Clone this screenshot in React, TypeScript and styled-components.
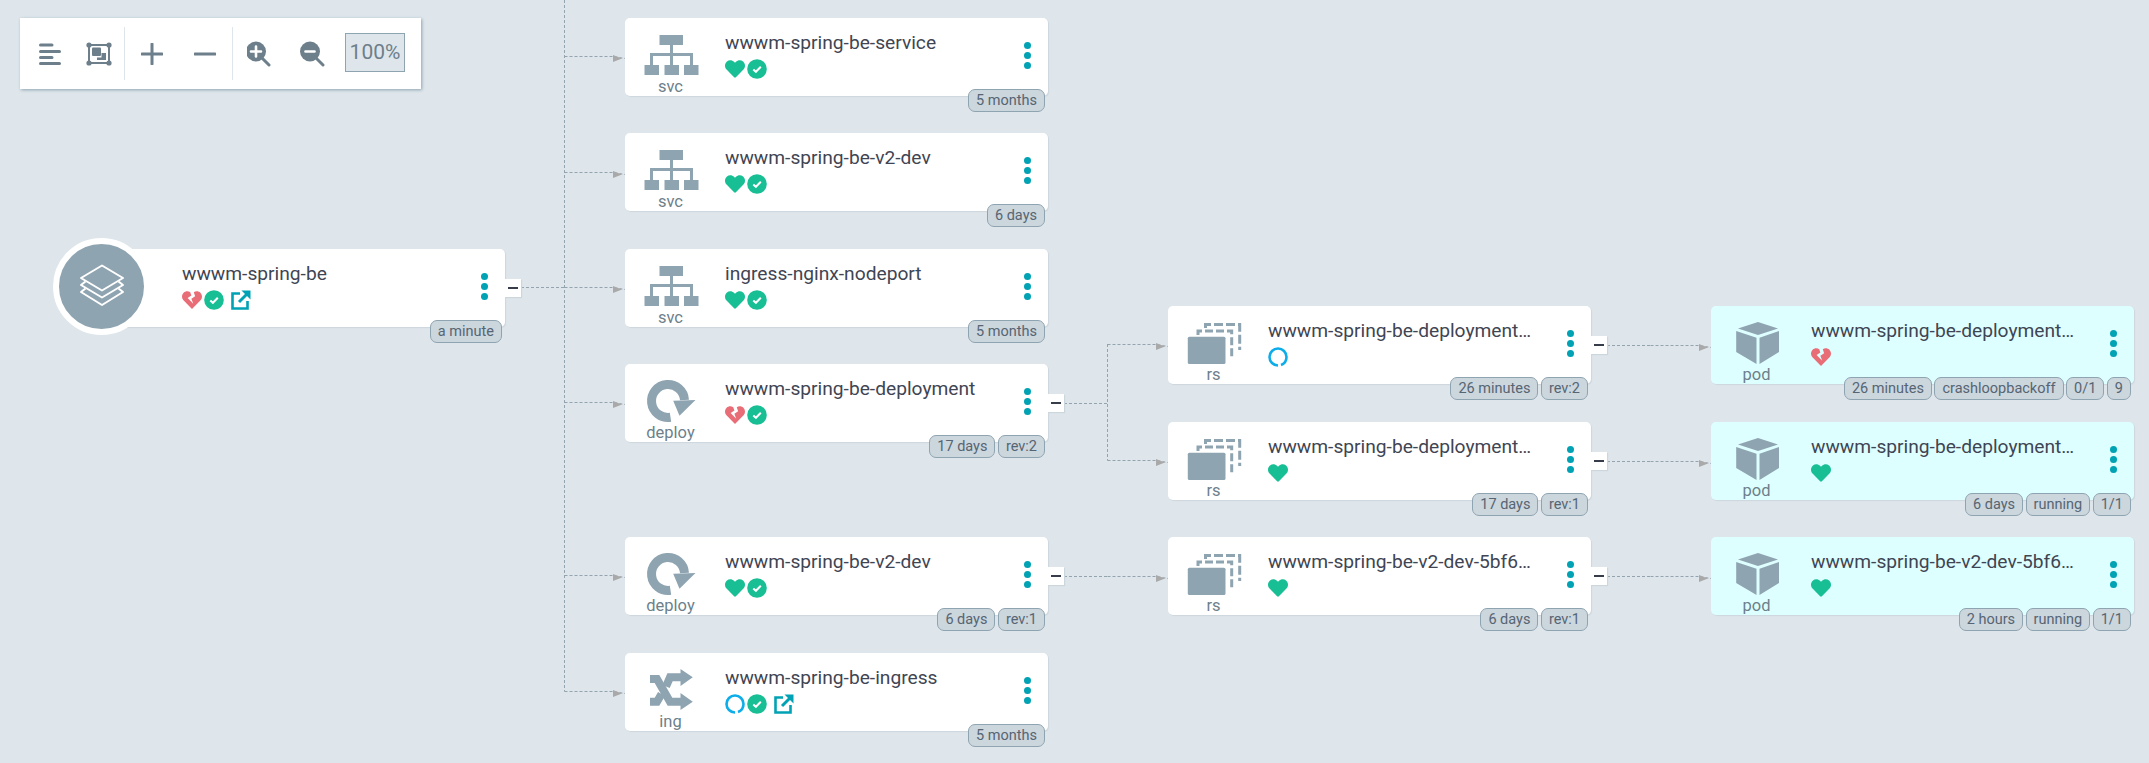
import React from 'react';
import styled, { createGlobalStyle } from 'styled-components';
import { FaHeart, FaHeartBroken } from 'react-icons/fa';

const Global = createGlobalStyle`
  html, body { margin: 0; padding: 0; background: #dee6eb; }
  body { font-family: Roboto, "Liberation Sans", sans-serif; }
`;

const Canvas = styled.div`
  position: relative;
  width: 2149px;
  height: 763px;
  overflow: hidden;
  background: #dee6eb;
`;

const EdgeLayer = styled.svg`
  position: absolute;
  left: 0;
  top: 0;
  width: 2149px;
  height: 763px;
`;

const Toolbar = styled.div`
  position: absolute;
  left: 20px;
  top: 18px;
  width: 401px;
  height: 71px;
  box-sizing: border-box;
  display: flex;
  align-items: center;
  padding: 8px 0 8px 5px;
  background: #fff;
  box-shadow: 1px 1px 3px #8fa4b1;
  z-index: 5;
`;

const ToolGroup = styled.div<{ $divided?: boolean; $w: number }>`
  display: flex;
  align-items: center;
  height: 53px;
  width: ${p => p.$w}px;
  box-sizing: border-box;
  border-right: ${p => (p.$divided ? '1px solid #dee6eb' : 'none')};
`;

const ToolButton = styled.div<{ $w: number }>`
  display: flex;
  align-items: center;
  justify-content: center;
  width: ${p => p.$w}px;
  height: 53px;
  color: #6d7f8b;
`;

const ZoomBox = styled.div`
  width: 60px;
  height: 39px;
  margin-left: 6px;
  margin-top: -3px;
  box-sizing: border-box;
  display: flex;
  align-items: center;
  justify-content: center;
  background: #dee6eb;
  border: 1px solid #8fa4b1;
  color: #6d7f8b;
  font-size: 21px;
`;

const Card = styled.div<{ $x: number; $y: number; $pod?: boolean }>`
  position: absolute;
  left: ${p => p.$x}px;
  top: ${p => p.$y}px;
  width: 423px;
  height: 78px;
  display: flex;
  background: ${p => (p.$pod ? '#deffff' : '#fff')};
  border-radius: 5px;
  box-shadow: 1px 1px 1px #ccd6dd;
`;

const IconCol = styled.div`
  width: 91px;
  flex: none;
  padding-top: 14px;
  display: flex;
  flex-direction: column;
  align-items: center;
`;

const KindLabel = styled.div`
  font-size: 16.5px;
  line-height: 16px;
  margin-top: 1px;
  color: #6d7f8b;
`;

const AppBadge = styled.div`
  position: absolute;
  left: -29px;
  top: -11px;
  width: 97px;
  height: 97px;
  box-sizing: border-box;
  border: 6px solid #fff;
  border-radius: 50%;
  background: #8fa4b1;
  display: flex;
  align-items: center;
  justify-content: center;
`;

const Info = styled.div`
  width: 268px;
  flex: none;
  margin-left: 9px;
  padding-top: 12px;
`;

const Title = styled.div`
  font-size: 19.2px;
  line-height: 26px;
  color: #3f4553;
  white-space: nowrap;
  overflow: hidden;
  text-overflow: ellipsis;
`;

const StatusRow = styled.div`
  display: flex;
  align-items: center;
  gap: 2px;
  height: 20px;
  margin-top: 3px;
`;

const LinkIcon = styled.svg`
  margin-left: 5px;
  margin-top: -1px;
`;

const Menu = styled.div`
  flex: none;
  margin-left: 31px;
  margin-top: 24px;
  display: flex;
  flex-direction: column;
  gap: 3px;
`;

const Dot = styled.i`
  display: block;
  width: 7px;
  height: 7px;
  border-radius: 50%;
  background: #00a2b3;
`;

const Expand = styled.div`
  position: absolute;
  left: 100%;
  top: 30px;
  width: 16px;
  height: 18px;
  background: #fff;
  box-shadow: 1px 1px 1px #ccd6dd;
  display: flex;
  align-items: center;
  justify-content: center;
  &::before {
    content: '';
    width: 10px;
    height: 1.5px;
    background: #363c4a;
  }
`;

const Tags = styled.div`
  position: absolute;
  right: 3px;
  top: 71px;
  display: flex;
  gap: 2.5px;
`;

const Tag = styled.span`
  height: 23px;
  box-sizing: border-box;
  padding: 0 7px;
  display: flex;
  align-items: center;
  font-size: 14.5px;
  color: #566573;
  background: #ccd6dd;
  border: 1px solid #8fa4b1;
  border-radius: 7px;
`;

const G = '#8fa4b1';
const GREEN = '#18be94';
const RED = '#e96d76';

const Svc = () => (
  <svg width="60" height="46" viewBox="0 0 60 46">
    <g fill={G}>
      <rect x="18.5" y="3" width="23.5" height="10" />
      <rect x="3.5" y="33" width="14.5" height="10" />
      <rect x="23.5" y="33" width="14.5" height="10" />
      <rect x="43" y="33" width="14.5" height="10" />
    </g>
    <path d="M30.5 13V33M10.5 33V22.5H50.5V33" fill="none" stroke={G} strokeWidth="3" />
  </svg>
);

const Deploy = () => (
  <svg width="60" height="46" viewBox="0 0 60 46">
    <path d="M29.5 39.3A16.5 16.5 0 1 1 43.5 22" fill="none" stroke={G} strokeWidth="9" />
    <path d="M32.2 22.7L54.5 22L38.5 37.7Z" fill={G} />
  </svg>
);

const Ing = () => (
  <svg width="60" height="46" viewBox="0 0 60 46">
    <path d="M9 12H16L29 34.7H41" fill="none" stroke={G} strokeWidth="8" />
    <path d="M9 34.7H16L20.5 27M25 19.5L29 10.3H41" fill="none" stroke={G} strokeWidth="8" />
    <path d="M39.5 2L51.8 10.3L39.5 19ZM39.5 26L51.8 34.7L39.5 43Z" fill={G} />
  </svg>
);

const Rs = () => (
  <svg width="60" height="46" viewBox="0 0 60 46">
    <rect x="3.8" y="16.7" width="37.7" height="27.3" rx="1.5" fill={G} />
    <path d="M14 15V11H47.7V38" fill="none" stroke={G} strokeWidth="3" strokeDasharray="8 3" />
    <path d="M21.5 8V4.5H55.7V30" fill="none" stroke={G} strokeWidth="3" strokeDasharray="9 3" />
  </svg>
);

const Pod = () => (
  <svg width="60" height="46" viewBox="0 0 60 46">
    <g fill={G}>
      <path d="M31 2L51 8.5L31 15L11 8.5Z" />
      <path d="M9.2 11L29.5 17.8V44L9.2 32Z" />
      <path d="M52 11L32.5 17.8V44L52 32Z" />
    </g>
  </svg>
);

const Layers = () => (
  <svg width="46" height="46" viewBox="0 0 46 46">
    <g fill="none" stroke="#fff" strokeWidth="2" strokeLinejoin="round">
      <path d="M23 1.5L44 14L23 26.5L2 14Z" />
      <path d="M6.5 17.5L2 21L23 33.5L44 21L39.5 17.5" />
      <path d="M6.5 24.5L2 28L23 41L44 28L39.5 24.5" />
    </g>
  </svg>
);

const Check = () => (
  <svg width="20" height="20" viewBox="0 0 20 20">
    <circle cx="10" cy="10" r="9.8" fill={GREEN} />
    <path d="M6.3 10.4L8.9 12.8L13.8 7.8" fill="none" stroke="#fff" strokeWidth="2" />
  </svg>
);

const Progress = () => (
  <svg width="20" height="20" viewBox="0 0 20 20">
    <circle
      cx="10"
      cy="10"
      r="8.5"
      fill="none"
      stroke="#0dadea"
      strokeWidth="2.6"
      strokeDasharray="50 3.4"
      transform="rotate(90 10 10)"
    />
  </svg>
);

const Link = () => (
  <LinkIcon width="20" height="20" viewBox="0 0 20 20">
    <path d="M9 3.5H1.5V18.5H16.5V11" fill="none" stroke="#00a2b3" strokeWidth="2.6" />
    <path d="M10.5 0.5H19.5V9.5Z" fill="#00a2b3" />
    <path d="M16 4L8 12" stroke="#00a2b3" strokeWidth="3" />
  </LinkIcon>
);

type Health = 'ok' | 'broken' | 'progress';
interface NodeData {
  x: number;
  y: number;
  kind: 'svc' | 'deploy' | 'rs' | 'pod' | 'ing' | 'app';
  name: string;
  health: Health;
  synced?: boolean;
  link?: boolean;
  expand?: boolean;
  tags: string[];
}

const DEP = 'wwwm-spring-be-deployment-7d9fb6c5d8';
const nodes: NodeData[] = [
  { x: 82, y: 249, kind: 'app', name: 'wwwm-spring-be', health: 'broken', synced: true, link: true, expand: true, tags: ['a minute'] },
  { x: 625, y: 18, kind: 'svc', name: 'wwwm-spring-be-service', health: 'ok', synced: true, tags: ['5 months'] },
  { x: 625, y: 133, kind: 'svc', name: 'wwwm-spring-be-v2-dev', health: 'ok', synced: true, tags: ['6 days'] },
  { x: 625, y: 249, kind: 'svc', name: 'ingress-nginx-nodeport', health: 'ok', synced: true, tags: ['5 months'] },
  { x: 625, y: 364, kind: 'deploy', name: 'wwwm-spring-be-deployment', health: 'broken', synced: true, expand: true, tags: ['17 days', 'rev:2'] },
  { x: 625, y: 537, kind: 'deploy', name: 'wwwm-spring-be-v2-dev', health: 'ok', synced: true, expand: true, tags: ['6 days', 'rev:1'] },
  { x: 625, y: 653, kind: 'ing', name: 'wwwm-spring-be-ingress', health: 'progress', synced: true, link: true, tags: ['5 months'] },
  { x: 1168, y: 306, kind: 'rs', name: DEP, health: 'progress', expand: true, tags: ['26 minutes', 'rev:2'] },
  { x: 1168, y: 422, kind: 'rs', name: DEP, health: 'ok', expand: true, tags: ['17 days', 'rev:1'] },
  { x: 1168, y: 537, kind: 'rs', name: 'wwwm-spring-be-v2-dev-5bf6c8d97f', health: 'ok', expand: true, tags: ['6 days', 'rev:1'] },
  { x: 1711, y: 306, kind: 'pod', name: DEP, health: 'broken', tags: ['26 minutes', 'crashloopbackoff', '0/1', '9'] },
  { x: 1711, y: 422, kind: 'pod', name: DEP, health: 'ok', tags: ['6 days', 'running', '1/1'] },
  { x: 1711, y: 537, kind: 'pod', name: 'wwwm-spring-be-v2-dev-5bf6c8d97f', health: 'ok', tags: ['2 hours', 'running', '1/1'] },
];

const kindIcon = { svc: Svc, deploy: Deploy, rs: Rs, pod: Pod, ing: Ing };

// one source box fanning out at a bend to cards in one column
interface EdgeGroup {
  x: number;
  y: number;
  bend: number;
  tip: number;
  top: number;
  bottom: number;
  rows: number[];
}

const groups: EdgeGroup[] = [
  { x: 521, y: 287, bend: 564, tip: 625, top: 0, bottom: 691, rows: [56, 172, 287, 402, 575, 691] },
  { x: 1064, y: 403, bend: 1107, tip: 1168, top: 344, bottom: 460, rows: [344, 460] },
  { x: 1064, y: 576, bend: 1107, tip: 1168, top: 576, bottom: 576, rows: [576] },
  { x: 1607, y: 345, bend: 1650, tip: 1711, top: 345, bottom: 345, rows: [345] },
  { x: 1607, y: 461, bend: 1650, tip: 1711, top: 461, bottom: 461, rows: [461] },
  { x: 1607, y: 576, bend: 1650, tip: 1711, top: 576, bottom: 576, rows: [576] },
];

const DashLine = styled.path`
  fill: none;
  stroke: #94a4af;
  stroke-width: 1;
  stroke-dasharray: 3 2;
`;

const Edges = () => (
  <EdgeLayer viewBox="0 0 2149 763">
    {groups.map((g, i) => (
      <g key={i}>
        <DashLine d={`M${g.x} ${g.y + 0.5}H${g.bend + 0.5}`} />
        {g.bottom > g.top && <DashLine d={`M${g.bend + 0.5} ${g.top}V${g.bottom + 0.5}`} />}
        {g.rows.map(r => (
          <g key={r}>
            <DashLine d={`M${g.bend + 0.5} ${r + 0.5}H${g.tip - 12}L${g.tip} ${r + 2.5}`} />
            <path d={`M${g.tip - 12} ${r - 1}L${g.tip - 3} ${r + 2.5}L${g.tip - 12} ${r + 6}Z`} fill="#a9a9a9" />
          </g>
        ))}
      </g>
    ))}
  </EdgeLayer>
);

const GraphNode = ({ n }: { n: NodeData }) => {
  const Icon = n.kind === 'app' ? null : kindIcon[n.kind];
  return (
    <Card $x={n.x} $y={n.y} $pod={n.kind === 'pod'}>
      {n.kind === 'app' ? (
        <>
          <AppBadge>
            <Layers />
          </AppBadge>
          <IconCol />
        </>
      ) : (
        <IconCol>
          {Icon && <Icon />}
          <KindLabel>{n.kind}</KindLabel>
        </IconCol>
      )}
      <Info>
        <Title>{n.name}</Title>
        <StatusRow>
          {n.health === 'ok' && <FaHeart size={20} color={GREEN} />}
          {n.health === 'broken' && <FaHeartBroken size={20} color={RED} />}
          {n.health === 'progress' && <Progress />}
          {n.synced && <Check />}
          {n.link && <Link />}
        </StatusRow>
      </Info>
      <Menu>
        <Dot />
        <Dot />
        <Dot />
      </Menu>
      {n.expand && <Expand />}
      <Tags>
        {n.tags.map(t => (
          <Tag key={t}>{t}</Tag>
        ))}
      </Tags>
    </Card>
  );
};

const ToolIcon = styled.svg`
  display: block;
`;

const C = 'currentColor';

const Tools = () => (
  <Toolbar>
    <ToolGroup $w={100} $divided>
      <ToolButton $w={49}>
        <ToolIcon width="22" height="24" viewBox="0 0 22 24">
          <path d="M1.5 3H13M1.5 9.5H20.5M1.5 15.5H13M1.5 21.5H20.5" stroke={C} strokeWidth="3" strokeLinecap="round" />
        </ToolIcon>
      </ToolButton>
      <ToolButton $w={49}>
        <ToolIcon width="26" height="24" viewBox="0 0 26 24">
          <rect x="3" y="3" width="20" height="18" fill="none" stroke={C} strokeWidth="2" />
          <circle cx="3" cy="3" r="2.6" fill={C} />
          <circle cx="23" cy="3" r="2.6" fill={C} />
          <circle cx="3" cy="21" r="2.6" fill={C} />
          <circle cx="23" cy="21" r="2.6" fill={C} />
          <rect x="6" y="5.5" width="9" height="8.5" rx="1" fill={C} />
          <path d="M15.5 11H20V18H11V15.5H15.5Z" fill={C} />
        </ToolIcon>
      </ToolButton>
    </ToolGroup>
    <ToolGroup $w={108} $divided>
      <ToolButton $w={53}>
        <ToolIcon width="22" height="22" viewBox="0 0 22 22">
          <path d="M1 11H21M11 1V21" stroke={C} strokeWidth="3" strokeLinecap="round" />
        </ToolIcon>
      </ToolButton>
      <ToolButton $w={53}>
        <ToolIcon width="22" height="22" viewBox="0 0 22 22">
          <path d="M1 11H21" stroke={C} strokeWidth="3" strokeLinecap="round" />
        </ToolIcon>
      </ToolButton>
    </ToolGroup>
    <ToolGroup $w={187}>
      <ToolButton $w={53}>
        <ToolIcon width="26" height="26" viewBox="2 0 26 26">
          <circle cx="11" cy="10.5" r="10" fill={C} />
          <path d="M17 17L24 24" stroke={C} strokeWidth="3" strokeLinecap="round" />
          <path d="M6 10.5H16M11 5.5V15.5" stroke="#fff" strokeWidth="2.6" strokeLinecap="round" />
        </ToolIcon>
      </ToolButton>
      <ToolButton $w={53}>
        <ToolIcon width="26" height="26" viewBox="1 0 26 26">
          <circle cx="11" cy="10.5" r="10" fill={C} />
          <path d="M17 17L24 24" stroke={C} strokeWidth="3" strokeLinecap="round" />
          <path d="M6.5 10.5H15.5" stroke="#fff" strokeWidth="2.6" strokeLinecap="round" />
        </ToolIcon>
      </ToolButton>
      <ZoomBox>100%</ZoomBox>
    </ToolGroup>
  </Toolbar>
);

export default function App() {
  return (
    <Canvas>
      <Global />
      <Edges />
      {nodes.map(n => (
        <GraphNode key={`${n.x}-${n.y}`} n={n} />
      ))}
      <Tools />
    </Canvas>
  );
}
